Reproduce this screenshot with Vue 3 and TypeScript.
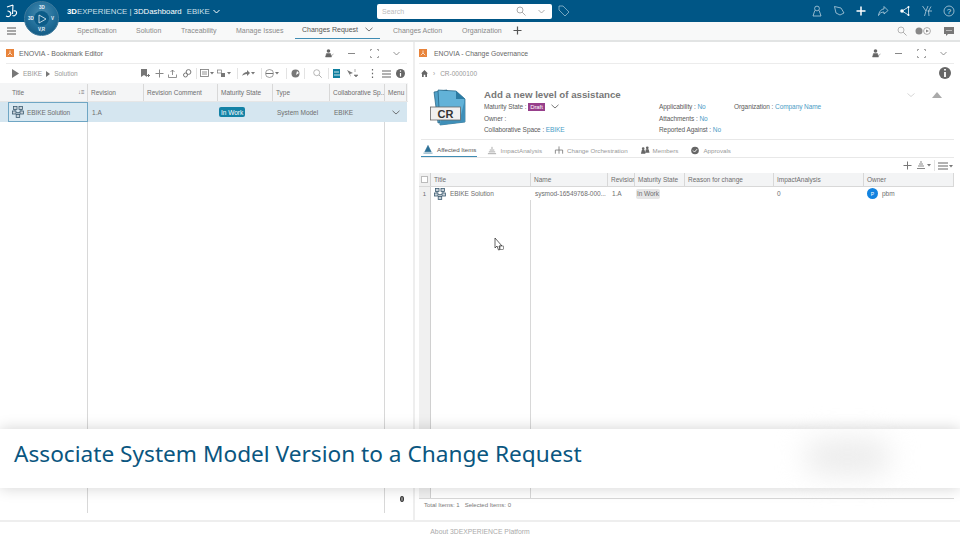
<script setup lang="ts">
const tabs = [
  { label: 'Specification', w: 59 },
  { label: 'Solution', w: 45 },
  { label: 'Traceability', w: 55 },
  { label: 'Manage Issues', w: 59 },
]
const leftCols = [
  { label: 'Title', w: 88 },
  { label: 'Revision', w: 56 },
  { label: 'Revision Comment', w: 74 },
  { label: 'Maturity State', w: 55 },
  { label: 'Type', w: 57 },
  { label: 'Collaborative Sp...', w: 55 },
  { label: 'Menu', w: 22 },
]
const rightCols = [
  { label: 'Title', w: 100 },
  { label: 'Name', w: 77 },
  { label: 'Revision', w: 27 },
  { label: 'Maturity State', w: 50 },
  { label: 'Reason for change', w: 89 },
  { label: 'ImpactAnalysis', w: 90 },
  { label: 'Owner', w: 90 },
]
const rightTabs = [
  { label: 'Affected Items', icon: 'tri', active: true },
  { label: 'ImpactAnalysis', icon: 'stack', active: false },
  { label: 'Change Orchestration', icon: 'tree', active: false },
  { label: 'Members', icon: 'people', active: false },
  { label: 'Approvals', icon: 'check', active: false },
]
</script>

<template>
  <div class="page">
    <header class="topbar">
      <svg class="ds" viewBox="0 0 16 16" width="16" height="16">
        <path d="M2 13 C6 15 8 11 6 9 C5 8 4 8 3.5 8 M3 4 L9 2 M9 2 L8.5 11 M9.5 8 C13 7 14 11 10 13 M8.5 12.5 L10 13" fill="none" stroke="#fff" stroke-width="1.1" />
      </svg>
      <div class="brand"><b>3D</b>EXPERIENCE | <span class="app">3DDashboard</span><span class="ctx">EBIKE</span>
        <svg width="7" height="5" viewBox="0 0 7 5"><path d="M.5 1 3.5 4 6.5 1" fill="none" stroke="#fff" /></svg>
      </div>
      <div class="search">
        <span>Search</span>
        <svg width="10" height="10" viewBox="0 0 10 10" class="mag"><circle cx="4" cy="4" r="3" fill="none" stroke="#888" stroke-width=".7" /><path d="M6.2 6.2 9.5 9.5" stroke="#888" stroke-width=".7" /></svg>
        <svg width="7" height="5" viewBox="0 0 7 5"><path d="M.5 1 3.5 4 6.5 1" fill="none" stroke="#999" stroke-width=".8" /></svg>
      </div>
      <svg class="tag" width="12" height="12" viewBox="0 0 12 12"><path d="M1 1 H5 L11 7 7 11 1 5 Z" fill="none" stroke="#a9c8da" stroke-width=".7" /></svg>
      <div class="top-icons">
        <svg width="12" height="12" viewBox="0 0 12 12"><circle cx="6" cy="3.5" r="2.4" fill="none" stroke="#cfe0ea" stroke-width=".7" /><path d="M3.8 5.5 2 11 H10 L8.2 5.5" fill="none" stroke="#cfe0ea" stroke-width=".7" /></svg>
        <svg width="12" height="12" viewBox="0 0 12 12"><path d="M1.5 1.5 L8 3 11 8 7 10 3 8 Z" fill="none" stroke="#cfe0ea" stroke-width=".7" /></svg>
        <svg width="12" height="12" viewBox="0 0 12 12"><path d="M6 1.5 V10.5 M1.5 6 H10.5" stroke="#fff" stroke-width="1.5" /></svg>
        <svg width="12" height="12" viewBox="0 0 12 12"><path d="M7 1.5 11 5.5 7 9 V7 C4 7 2.5 8.5 1.5 10.5 C2 7 4 4 7 4 Z" fill="none" stroke="#cfe0ea" stroke-width=".7" /></svg>
        <svg width="12" height="12" viewBox="0 0 12 12"><path d="M9.5 2 3 6 9.5 10 Z" fill="none" stroke="#fff" stroke-width=".8" /><circle cx="3" cy="6" r="1.8" fill="#fff" /><circle cx="9.5" cy="2" r="1" fill="#fff" /><circle cx="9.5" cy="10" r="1" fill="#fff" /></svg>
        <svg width="12" height="12" viewBox="0 0 12 12"><path d="M1.5 1 5 6 3.5 11 M7 1 5 6 M6.5 6 H11 M10 1.5 7.5 6 8 11" fill="none" stroke="#cfe0ea" stroke-width=".7" /></svg>
        <svg width="12" height="12" viewBox="0 0 12 12"><circle cx="6" cy="6" r="5" fill="none" stroke="#cfe0ea" stroke-width=".7" /><text x="6" y="8.5" class="qm">?</text></svg>
      </div>
    </header>

    <nav class="tabbar">
      <svg class="burger" width="9" height="8" viewBox="0 0 9 8"><path d="M0 1H9M0 4H9M0 7H9" stroke="#555" stroke-width="1" /></svg>
      <div class="tabs">
        <span v-for="t in tabs" :key="t.label" class="tab" :style="{ width: t.w + 'px' }">{{ t.label }}</span>
        <span class="tab active">Changes Request
          <svg width="8" height="5" viewBox="0 0 8 5"><path d="M.5 .8 4 4 7.5 .8" fill="none" stroke="#555" stroke-width=".8" /></svg>
        </span>
        <span class="tab after">Changes Action</span>
        <span class="tab after">Organization</span>
        <svg class="plus" width="9" height="9" viewBox="0 0 9 9"><path d="M4.5 .5V8.5M.5 4.5H8.5" stroke="#555" stroke-width="1.2" /></svg>
      </div>
      <div class="tab-right">
        <svg width="10" height="10" viewBox="0 0 10 10"><circle cx="4" cy="4" r="3" fill="none" stroke="#999" stroke-width=".7" /><path d="M6.2 6.2 9.5 9.5" stroke="#999" stroke-width=".8" /></svg>
        <svg width="17" height="8" viewBox="0 0 17 8"><circle cx="4" cy="4" r="3.5" fill="#888" /><circle cx="12" cy="4" r="3.4" fill="#fff" stroke="#888" stroke-width=".7" /><path d="M11 2.5 14 4 11 5.5Z" fill="#888" /></svg>
        <svg width="10" height="9" viewBox="0 0 10 9"><path d="M0 0H10V7H4L2 9V7H0Z" fill="#777" /><path d="M2.5 3.5H7.5" stroke="#fff" stroke-dasharray="1 1" /></svg>
      </div>
    </nav>

    <main class="panels">
      <section class="panel left">
        <div class="wtitle">
          <span class="wicon"><svg width="6" height="6" viewBox="0 0 6 6"><path d="M3 .5 V3 L.8 5.2 M3 3 L5.2 5.2" fill="none" stroke="#fff" stroke-width=".7" /></svg></span>
          <span class="wname">ENOVIA - Bookmark Editor</span>
          <div class="wctl">
            <svg width="9" height="9" viewBox="0 0 9 9"><circle cx="3.5" cy="2" r="1.8" fill="#666" /><path d="M.5 8 1.5 4.5H5.5L6.5 8ZM6 7 8.5 5" fill="#666" stroke="#666" stroke-width=".5" /></svg>
            <svg width="9" height="9" viewBox="0 0 9 9"><path d="M1 4.5H8" stroke="#888" /></svg>
            <svg width="9" height="9" viewBox="0 0 9 9"><path d="M.5 2V.5H2M7 .5H8.5V2M8.5 7V8.5H7M2 8.5H.5V7" fill="none" stroke="#888" stroke-width=".8" /></svg>
            <svg width="9" height="9" viewBox="0 0 9 9"><path d="M1.5 3 4.5 6 7.5 3" fill="none" stroke="#777" stroke-width=".8" /></svg>
          </div>
        </div>
        <div class="ltools">
          <svg width="7" height="9" viewBox="0 0 7 9"><path d="M0 0 7 4.5 0 9Z" fill="#777" /></svg>
          <span class="crumb">EBIKE</span>
          <svg width="4" height="6" viewBox="0 0 4 6"><path d="M0 0 4 3 0 6Z" fill="#777" /></svg>
          <span class="crumb">Solution</span>
          <div class="ticons">
            <svg width="9" height="9" viewBox="0 0 9 9"><path d="M0 0H6V8L3 6 0 8Z" fill="#777" /><path d="M6 6.5H9M7.5 5V8" stroke="#777" /></svg>
            <svg class="ml5" width="9" height="9" viewBox="0 0 9 9"><path d="M4.5 .5V8.5M.5 4.5H8.5" stroke="#888" stroke-width="1" /></svg>
            <svg class="ml4" width="9" height="9" viewBox="0 0 9 9"><path d="M4.5 6V1M2.5 3 4.5 1 6.5 3M.5 5.5V8.5H8.5V5.5" fill="none" stroke="#777" stroke-width=".8" /></svg>
            <svg class="ml6" width="9" height="9" viewBox="0 0 9 9"><circle cx="5.5" cy="3" r="2.4" fill="none" stroke="#777" /><circle cx="2.5" cy="6" r="2" fill="none" stroke="#777" /></svg>
            <i class="sep ml4"></i>
            <svg class="ml3" width="14" height="9" viewBox="0 0 14 9"><rect x=".5" y=".5" width="8" height="7" fill="none" stroke="#777" stroke-width=".8" /><path d="M2 3H7M2 5H7" stroke="#777" stroke-width=".8" /><path d="M10 3H14L12 5.5Z" fill="#777" /></svg>
            <svg class="ml3" width="14" height="9" viewBox="0 0 14 9"><rect x=".5" y="1" width="4" height="3" fill="none" stroke="#777" stroke-width=".7" /><rect x="4" y="4" width="4" height="4" fill="#777" /><path d="M10 3H14L12 5.5Z" fill="#777" /></svg>
            <i class="sep ml6"></i>
            <svg class="ml3" width="14" height="9" viewBox="0 0 14 9"><path d="M1 7C2 4 4 3 6 3V1L9 4 6 7V5C4 5 2 6 1 7Z" fill="#777" /><path d="M10 3H14L12 5.5Z" fill="#777" /></svg>
            <i class="sep ml6"></i>
            <svg class="ml3" width="14" height="9" viewBox="0 0 14 9"><circle cx="4.5" cy="4.5" r="4" fill="none" stroke="#777" stroke-width=".7" /><path d="M1 4.5H8" stroke="#777" /><path d="M10 3H14L12 5.5Z" fill="#777" /></svg>
            <i class="sep ml7"></i>
            <svg class="ml4" width="9" height="9" viewBox="0 0 9 9"><circle cx="4.5" cy="4.5" r="4" fill="#777" /><path d="M6 2 8 4 5 6Z" fill="#fff" /></svg>
            <i class="sep ml4"></i>
            <svg class="ml8" width="9" height="9" viewBox="0 0 9 9"><circle cx="3.7" cy="3.7" r="3" fill="none" stroke="#999" stroke-width=".7" /><path d="M6 6 8.7 8.7" stroke="#999" stroke-width=".8" /></svg>
            <i class="sep ml6"></i>
            <svg class="ml4" width="9" height="9" viewBox="0 0 9 9"><rect x="0" y="0" width="7" height="9" fill="#0f7f9f" /><path d="M1 3H6M1 6H9" stroke="#fff" stroke-width=".8" /></svg>
            <svg class="ml5" width="12" height="9" viewBox="0 0 12 9"><path d="M0 1 6 4 3 5 4 8Z" fill="#777" /><path d="M8 0V3M7 6H11L9 8Z" stroke="#777" stroke-width=".6" fill="#777" /></svg>
            <svg class="ml12" width="3" height="9" viewBox="0 0 3 9"><path d="M1.5 0V1.5M1.5 3.7V5.2M1.5 7.4V9" stroke="#666" stroke-width="1.2" /></svg>
            <svg class="ml8" width="9" height="8" viewBox="0 0 9 8"><path d="M0 1H9M0 4H9M0 7H9" stroke="#666" stroke-width="1.2" /></svg>
            <svg class="ml5" width="9" height="9" viewBox="0 0 9 9"><circle cx="4.5" cy="4.5" r="4.5" fill="#666" /><path d="M4.5 1.5V2.8M4.5 4V7.5" stroke="#fff" stroke-width="1.2" /></svg>
          </div>
        </div>
        <div class="ltable">
          <div class="lhead">
            <span v-for="c in leftCols" :key="c.label" class="lcell" :style="{ width: c.w + 'px' }">{{ c.label }}</span>
            <span class="sort">↓≡</span>
          </div>
          <div class="lrow">
            <span class="lcell first">
              <svg width="12" height="12" viewBox="0 0 12 12"><g fill="#c8d2d9" stroke="#3d5b70" stroke-width=".8"><rect x="1.5" y=".5" width="3.5" height="3" /><rect x="7" y=".5" width="3.5" height="3" /><rect x=".5" y="5" width="3.5" height="3" /><rect x="8" y="5" width="3.5" height="3" /><rect x="4.2" y="8.5" width="3.5" height="3" /></g><path d="M3 3.5V5M9 3.5V5M4 6.5H8M6 6.5V8.5" stroke="#3d5b70" stroke-width=".7" /></svg>
              EBIKE Solution
            </span>
            <span class="lcell" :style="{ width: leftCols[1].w + 'px' }">1.A</span>
            <span class="lcell" :style="{ width: leftCols[2].w + 'px' }"></span>
            <span class="lcell" :style="{ width: leftCols[3].w + 'px' }"><em class="inwork">In Work</em></span>
            <span class="lcell" :style="{ width: leftCols[4].w + 'px' }">System Model</span>
            <span class="lcell" :style="{ width: leftCols[5].w + 'px' }">EBIKE</span>
            <span class="lcell menu" :style="{ width: leftCols[6].w + 'px' }">
              <svg width="8" height="5" viewBox="0 0 8 5"><path d="M.5 .8 4 4 7.5 .8" fill="none" stroke="#555" stroke-width=".8" /></svg>
            </span>
          </div>
          <div class="lbody">
            <span class="lfill" :style="{ width: leftCols[0].w + 'px' }"></span>
            <span class="lfill" :style="{ width: '297px' }"></span>
            <span class="lfill last"><svg width="4" height="6" viewBox="0 0 4 6"><ellipse cx="2" cy="3" rx="2" ry="3" fill="#333" /><path d="M2 1.3V4.7" stroke="#fff" stroke-width=".8" /></svg></span>
          </div>
        </div>
      </section>

      <section class="panel right">
        <div class="wtitle">
          <span class="wicon"><svg width="6" height="6" viewBox="0 0 6 6"><path d="M3 .5 V3 L.8 5.2 M3 3 L5.2 5.2" fill="none" stroke="#fff" stroke-width=".7" /></svg></span>
          <span class="wname">ENOVIA - Change Governance</span>
          <div class="wctl">
            <svg width="9" height="9" viewBox="0 0 9 9"><circle cx="3.5" cy="2" r="1.8" fill="#666" /><path d="M.5 8 1.5 4.5H5.5L6.5 8ZM6 7 8.5 5" fill="#666" stroke="#666" stroke-width=".5" /></svg>
            <svg width="9" height="9" viewBox="0 0 9 9"><path d="M1 4.5H8" stroke="#888" /></svg>
            <svg width="9" height="9" viewBox="0 0 9 9"><path d="M.5 2V.5H2M7 .5H8.5V2M8.5 7V8.5H7M2 8.5H.5V7" fill="none" stroke="#888" stroke-width=".8" /></svg>
            <svg width="9" height="9" viewBox="0 0 9 9"><path d="M1.5 3 4.5 6 7.5 3" fill="none" stroke="#777" stroke-width=".8" /></svg>
          </div>
        </div>
        <div class="rcrumb">
          <svg width="7" height="7" viewBox="0 0 7 7"><path d="M3.5 0 7 3.5H6V7H4.3V4.7H2.7V7H1V3.5H0Z" fill="#666" /></svg>
          <span class="gt">›</span>
          <span>CR-0000100</span>
          <svg class="info" width="12" height="12" viewBox="0 0 12 12"><circle cx="6" cy="6" r="6" fill="#666" /><path d="M6 2V3.6M6 5V10" stroke="#fff" stroke-width="1.8" /></svg>
        </div>
        <div class="crhead">
          <svg class="crlogo" width="38" height="40" viewBox="0 0 38 40">
            <path d="M4 6 17 4 20 34 8 37Z" fill="#4fa0c8" stroke="#1f5f80" stroke-width=".7" />
            <path d="M8 4 26 5 35 13 35 36 10 39Z" fill="#62b2d8" stroke="#1f5f80" stroke-width=".7" />
            <path d="M26 5 35 13 26 13Z" fill="#2b7ba3" />
            <path d="M30 33 35 13 35 36 10 39 11 33Z" fill="#3f8fb8" />
            <rect x=".5" y="21" width="30" height="13" fill="#f0f0f0" stroke="#666" stroke-width=".8" />
            <text x="15.5" y="32" class="crtxt">CR</text>
          </svg>
          <div class="crinfo">
            <div class="crtitle">Add a new level of assistance</div>
            <div class="crcols">
              <div class="crcol first">
                <div>Maturity State : <em class="draft">Draft</em>
                  <svg class="dd" width="8" height="5" viewBox="0 0 8 5"><path d="M.5 .8 4 4 7.5 .8" fill="none" stroke="#555" stroke-width=".8" /></svg>
                </div>
                <div>Owner :</div>
                <div>Collaborative Space : <a>EBIKE</a></div>
              </div>
              <div class="crcol second">
                <div>Applicability : <a>No</a></div>
                <div>Attachments : <a>No</a></div>
                <div>Reported Against : <a>No</a></div>
              </div>
              <div class="crcol">
                <div>Organization : <a>Company Name</a></div>
              </div>
            </div>
          </div>
          <div class="crarrows">
            <svg width="8" height="4" viewBox="0 0 8 4"><path d="M.5 .5 4 3.5 7.5 .5" fill="none" stroke="#bbb" stroke-width=".6" /></svg>
            <svg width="10" height="6" viewBox="0 0 10 6"><path d="M5 0 10 6H0Z" fill="#aaa" /></svg>
          </div>
        </div>
        <div class="rtabs">
          <span v-for="t in rightTabs" :key="t.label" class="rtab" :class="{ active: t.active }">
            <svg width="10" height="9" viewBox="0 0 11 9">
              <path v-if="t.icon === 'tri'" d="M5.5 0 9 7H2ZM.5 8.5H10.5" fill="#2a6f96" stroke="#2a6f96" stroke-width=".7" />
              <path v-else-if="t.icon === 'stack'" d="M5.5 .5V3M3 4H8M2 6H9M1 8H10" stroke="#999" stroke-width=".9" fill="none" />
              <path v-else-if="t.icon === 'tree'" d="M5.5 0V4M1.5 8V4H9.5V8M5.5 4V8" stroke="#777" stroke-width=".9" fill="none" />
              <path v-else-if="t.icon === 'people'" d="M1 8 2 4H5L6 8ZM5.5 7 6.5 3H9.5L10.5 7ZM2 2.5A1.3 1.3 0 1 0 5 2.5 1.3 1.3 0 1 0 2 2.5ZM6.5 1.5A1.3 1.3 0 1 0 9.5 1.5 1.3 1.3 0 1 0 6.5 1.5Z" fill="#666" />
              <template v-else>
                <circle cx="5.5" cy="4.5" r="4.2" fill="#666" />
                <path d="M3.3 4.5 5 6.2 7.8 3" fill="none" stroke="#fff" stroke-width="1" />
              </template>
            </svg>
            {{ t.label }}
          </span>
        </div>
        <div class="rtools">
          <svg width="9" height="9" viewBox="0 0 9 9"><path d="M4.5 .5V8.5M.5 4.5H8.5" stroke="#777" stroke-width="1" /></svg>
          <svg width="14" height="9" viewBox="0 0 14 9"><path d="M4 0V2M2 3H6M1 5H7M0 7.5H8" stroke="#888" stroke-width="1" /><path d="M10 3H14L12 5.5Z" fill="#777" /></svg>
          <i class="sep"></i>
          <svg width="15" height="8" viewBox="0 0 15 8"><path d="M0 1H10M0 4H10M0 7H10" stroke="#666" stroke-width="1.2" /><path d="M11 3H15L13 5.5Z" fill="#777" /></svg>
        </div>
        <div class="rtable">
          <div class="rhead">
            <span class="gutter"><i class="chk"></i></span>
            <span v-for="c in rightCols" :key="c.label" class="rcell" :style="{ width: c.w + 'px' }">{{ c.label }}</span>
          </div>
          <div class="rrow">
            <span class="gutter num">1</span>
            <span class="rcell" :style="{ width: rightCols[0].w + 'px' }">
              <svg width="12" height="12" viewBox="0 0 12 12"><g fill="#c8d2d9" stroke="#3d5b70" stroke-width=".8"><rect x="1.5" y=".5" width="3.5" height="3" /><rect x="7" y=".5" width="3.5" height="3" /><rect x=".5" y="5" width="3.5" height="3" /><rect x="8" y="5" width="3.5" height="3" /><rect x="4.2" y="8.5" width="3.5" height="3" /></g><path d="M3 3.5V5M9 3.5V5M4 6.5H8M6 6.5V8.5" stroke="#3d5b70" stroke-width=".7" /></svg>
              EBIKE Solution
            </span>
            <span class="rcell" :style="{ width: rightCols[1].w + 'px' }">sysmod-16549768-000...</span>
            <span class="rcell" :style="{ width: rightCols[2].w + 'px' }">1.A</span>
            <span class="rcell" :style="{ width: rightCols[3].w + 'px' }"><em class="iw-grey">In Work</em></span>
            <span class="rcell" :style="{ width: rightCols[4].w + 'px' }"></span>
            <span class="rcell" :style="{ width: rightCols[5].w + 'px' }">0</span>
            <span class="rcell" :style="{ width: rightCols[6].w + 'px' }"><i class="avatar">P</i>pbm</span>
          </div>
          <div class="rbody">
            <span class="gutter"></span>
            <span class="rfill" :style="{ width: rightCols[0].w + 'px' }"></span>
          </div>
        </div>
        <div class="rfoot">Total Items: 1 &nbsp; Selected Items: 0</div>
      </section>
    </main>

    <footer class="about">About 3DEXPERIENCE Platform</footer>

    <!-- compass sits over the top bar and the tab bar -->
    <div class="compass">
      <i class="c-core"></i>
      <span class="c-n">3D</span>
      <span class="c-w">3D</span>
      <svg class="c-play" width="10" height="10" viewBox="0 0 10 10"><path d="M2 1 9 5 2 9Z" fill="none" stroke="#e8f1f6" stroke-width=".8" /></svg>
      <span class="c-e">V</span>
      <span class="c-s">V,R</span>
    </div>

    <!-- cursor over the table -->
    <svg class="cursor" width="10" height="13" viewBox="0 0 10 13"><path d="M1 0 V10 L3 8 4.5 12 6 11.5 5 8 8 8Z" fill="#fff" stroke="#222" stroke-width=".7" /><rect x="6" y="8" width="3.5" height="3.5" fill="#fff" stroke="#222" stroke-width=".5" /></svg>

    <div class="banner">
      <h1>Associate System Model Version to a Change Request</h1>
      <div class="smudge"></div>
    </div>
  </div>
</template>

<style>
html, body { margin: 0; background: #fff; }
</style>

<style scoped>
* { box-sizing: border-box; }
.page {
  position: relative;
  width: 960px;
  height: 540px;
  overflow: hidden;
  display: flex;
  flex-direction: column;
  font-family: "Liberation Sans", Arial, sans-serif;
  font-size: 6.5px;
  color: #6e6e6e;
  background: #fff;
}
svg { flex: none; display: block; }
em { font-style: normal; }
.ml3 { margin-left: 3px; }
.ml4 { margin-left: 4px; }
.ml5 { margin-left: 5px; }
.ml6 { margin-left: 6px; }
.ml7 { margin-left: 7px; }
.ml8 { margin-left: 8px; }
.ml12 { margin-left: 12px; }

.topbar {
  height: 22px;
  flex: none;
  background: #005686;
  display: flex;
  align-items: center;
  padding-left: 4px;
  color: #fff;
}
.ds { margin-right: 47px; }
.brand {
  width: 310px;
  display: flex;
  align-items: center;
  font-size: 7.8px;
  white-space: pre;
  color: #cfe0ea;
}
.brand b { color: #fff; }
.brand .app { color: #fff; }
.brand .ctx { margin: 0 3px 0 5px; }
.search {
  width: 175px;
  height: 15px;
  background: #fff;
  border-radius: 2px;
  display: flex;
  align-items: center;
  padding: 0 7px 0 5px;
  color: #bbb;
  font-size: 7px;
}
.search span { flex: 1; }
.mag { margin-right: 12px; }
.tag { margin-left: 6px; }
.top-icons {
  margin-left: auto;
  width: 149px;
  padding-right: 5px;
  display: flex;
  justify-content: space-between;
  align-items: center;
}
.qm { font: 8px "Liberation Sans", sans-serif; fill: #cfe0ea; text-anchor: middle; }

.tabbar {
  height: 20px;
  flex: none;
  background: #f8f9f9;
  border-bottom: 2px solid #e2e4e4;
  display: flex;
  align-items: center;
  padding-left: 7px;
}
.burger { margin-right: 61px; }
.tabs { display: flex; align-items: stretch; height: 20px; font-size: 7px; color: #8a8a8a; }
.tab { display: flex; align-items: center; white-space: nowrap; height: 18px; }
.tab.after { margin-right: 20px; }
.tab.active {
  width: 85px;
  color: #555;
  padding: 0 7px;
  margin-right: 13px;
  gap: 7px;
  border-bottom: 1px solid #3f8cb3;
}
.plus { align-self: center; margin: -2px 0 0 -9px; }
.tab-right { margin-left: auto; display: flex; align-items: center; padding-right: 6px; }
.tab-right svg:nth-child(2) { margin: 0 12px 0 8px; }

.panels { flex: 1; display: flex; background: #eeeeee; padding-bottom: 2px; min-height: 0; }
.panel { background: #fff; display: flex; flex-direction: column; min-width: 0; }
.panel.left { width: 413px; margin-right: 2px; }
.panel.right { flex: 1; }

.wtitle {
  height: 22px;
  flex: none;
  margin: 0 6px;
  padding: 1px 0 0;
  border-bottom: 1px solid #ececec;
  display: flex;
  align-items: center;
  font-size: 7px;
  color: #666;
}
.right .wtitle { margin-left: 4px; font-size: 6.8px; }
.wicon { width: 8px; height: 8px; background: #e8833a; margin-right: 5px; display: flex; align-items: center; justify-content: center; }
.right .wicon { margin-right: 7px; }
.wctl { margin-left: auto; padding-right: 6px; display: flex; gap: 13.5px; align-items: center; }

.ltools {
  height: 19px;
  flex: none;
  display: flex;
  align-items: center;
  padding: 0 8px 0 12px;
  gap: 4px;
}
.crumb { color: #999; }
.ticons { margin-left: auto; display: flex; align-items: center; }
.sep { display: block; width: 1px; height: 11px; background: #e3e3e3; }

.ltable { flex: 1; display: flex; flex-direction: column; width: 408px; padding-bottom: 7px; position: relative; min-height: 0; }
.lhead { height: 19px; flex: none; background: #f4f5f6; display: flex; position: relative; border-bottom: 1px solid #e6e6e6; padding-top: 1px; }
.lcell { display: flex; align-items: center; padding-left: 3px; border-right: 1px solid #d8d8d8; white-space: nowrap; overflow: hidden; }
.lhead .lcell:first-child { padding-left: 12px; }
.sort { position: absolute; left: 78px; top: 6px; font-size: 6px; }
.lrow { height: 20px; flex: none; display: flex; background: #d5e6f0; width: 407px; }
.lrow .lcell { border-right: 0; }
.lcell.first { margin-left: 8px; width: 80px; border: 1px solid #6fa6c4; background: #d9e9f2; gap: 3px; padding-left: 3px; letter-spacing: -.1px; }
.lrow .lcell:nth-child(2) { padding-left: 4px; }
.lrow .lcell:nth-child(4) { padding-left: 1px; }
.lrow .lcell:nth-child(5) { padding-left: 4px; }
.lrow .lcell:nth-child(6) { padding-left: 4px; }
.menu { justify-content: center; padding-left: 0 !important; }
.inwork { background: #1382a6; color: #fff; padding: 1.5px 2px; border-radius: 2px; }
.lbody { flex: 1; display: flex; min-height: 0; }
.lfill { border-right: 1px solid #d8d8d8; }
.lfill.last { width: 22px; border: 0; position: relative; }
.lfill.last svg { position: absolute; left: 15px; bottom: 11px; }

.rcrumb { height: 20px; flex: none; display: flex; align-items: center; padding: 0 9px 2px 7px; gap: 4px; color: #999; font-size: 6.5px; margin-left: -1px; }
.gt { margin: 0 1px; }
.rcrumb .info { margin-left: auto; }
.crhead {
  height: 56px;
  flex: none;
  margin: 0 6px;
  border-bottom: 1px solid #e8e8e8;
  display: flex;
  padding-left: 9px;
  position: relative;
}
.crlogo { margin-top: 2px; }
.crtxt { font: bold 11px "Liberation Sans", sans-serif; fill: #333; text-anchor: middle; }
.crinfo { margin-left: 16px; }
.crtitle { font-size: 9.7px; font-weight: bold; color: #777; margin-top: 5px; height: 14px; }
.crcols { display: flex; margin-top: -2px; font-size: 6.5px; letter-spacing: -.08px; color: #5a5a5a; }
.crcol { display: flex; flex-direction: column; }
.crcol div { height: 11.5px; display: flex; align-items: center; white-space: pre; }
.crcol.first { width: 175px; }
.crcol.second { width: 75px; }
.crcol a { color: #4a9cc6; }
.draft { background: #973f8b; color: #fff; padding: 1px 2px; font-size: 6px; }
.dd { margin-left: 6px; }
.crarrows { position: absolute; right: 12px; top: 8px; display: flex; gap: 17px; align-items: center; }

.rtabs {
  height: 18px;
  flex: none;
  margin: 0 6px;
  border-bottom: 1px solid #e8e8e8;
  display: flex;
  align-items: flex-start;
  font-size: 6.2px;
  color: #999;
  gap: 12px;
}
.rtab { display: flex; align-items: center; gap: 3px; height: 17px; padding-top: 3px; white-space: nowrap; }
.rtab.active { color: #555; border-bottom: 1px solid #3f8cb3; padding: 3px 1px 0 2px; margin-right: -2px; gap: 4px; }

.rtools { height: 15px; flex: none; display: flex; justify-content: flex-end; align-items: center; gap: 3px; padding-right: 7px; }
.rtools svg:first-child { margin-right: 2px; }

.rtable { flex: 1; margin: 0 6px 0 4px; display: flex; flex-direction: column; border-bottom: 1px solid #d8d8d8; min-height: 0; }
.rhead { height: 14px; flex: none; background: #f3f4f5; display: flex; border-bottom: 1px solid #d8d8d8; }
.rrow { height: 13px; flex: none; display: flex; }
.rbody { flex: 1; display: flex; min-height: 0; }
.gutter { width: 12px; flex: none; display: flex; align-items: center; justify-content: center; background: #f0f0f0; border-right: 1px solid #d0d0d0; }
.num { font-size: 6px; }
.chk { display: block; width: 7px; height: 7px; background: #fff; border: 1px solid #bbb; }
.rcell { display: flex; align-items: center; padding-left: 3px; white-space: nowrap; overflow: hidden; border-right: 1px solid #d8d8d8; gap: 4px; }
.rrow .rcell { border-right: 0; letter-spacing: -.05px; }
.rrow .rcell:nth-child(3), .rrow .rcell:nth-child(4) { padding-left: 4px; }
.rrow .rcell:nth-child(5) { padding-left: 1px; }
.rfill { border-right: 1px solid #d8d8d8; }
.iw-grey { background: #e6e6e6; padding: 1.5px 1px; border-radius: 2px; }
.avatar { width: 11px; height: 11px; border-radius: 50%; background: #1283e0; color: #fff; font-style: normal; font-size: 5px; display: flex; align-items: center; justify-content: center; flex: none; }
.rfoot { height: 21px; flex: none; padding: 3px 0 0 9px; line-height: 6px; font-size: 6px; color: #777; white-space: pre; }

.about { height: 18px; flex: none; display: flex; align-items: center; justify-content: center; color: #aaa; font-size: 6.8px; }

.compass {
  position: absolute;
  left: 24px;
  top: 1px;
  width: 35px;
  height: 35px;
  border-radius: 50%;
  background: radial-gradient(circle at 50% 35%, #4a8cb0 0%, #226f9a 50%, #0b4f76 100%);
  border: 1px solid #3f7a9c;
  color: #eaf2f7;
  font-size: 4.5px;
  font-weight: bold;
}
.compass span { position: absolute; }
.c-core { position: absolute; left: 9px; top: 9px; width: 15px; height: 15px; border-radius: 50%; background: #0c5c88; }
.c-n { left: 14px; top: 3px; }
.c-w { left: 3px; top: 14px; }
.c-e { right: 4px; top: 14px; }
.c-s { left: 13px; bottom: 3px; }
.c-play { position: absolute; left: 12px; top: 12px; }

.cursor { position: absolute; left: 494px; top: 238px; }

.banner {
  position: absolute;
  left: 0;
  top: 429px;
  width: 960px;
  height: 59px;
  background: #fff;
  box-shadow: 0 0 14px rgba(0, 0, 0, .18);
  display: flex;
  align-items: center;
  padding-left: 14px;
}
.banner h1 {
  margin: 0 0 10px;
  font-family: "Noto Sans", sans-serif;
  font-weight: 400;
  font-size: 22.65px;
  color: #0a5680;
  white-space: nowrap;
}
.smudge {
  position: absolute;
  left: 805px;
  top: 10px;
  width: 85px;
  height: 36px;
  background: #ececec;
  filter: blur(14px);
  border-radius: 20px;
}
</style>
